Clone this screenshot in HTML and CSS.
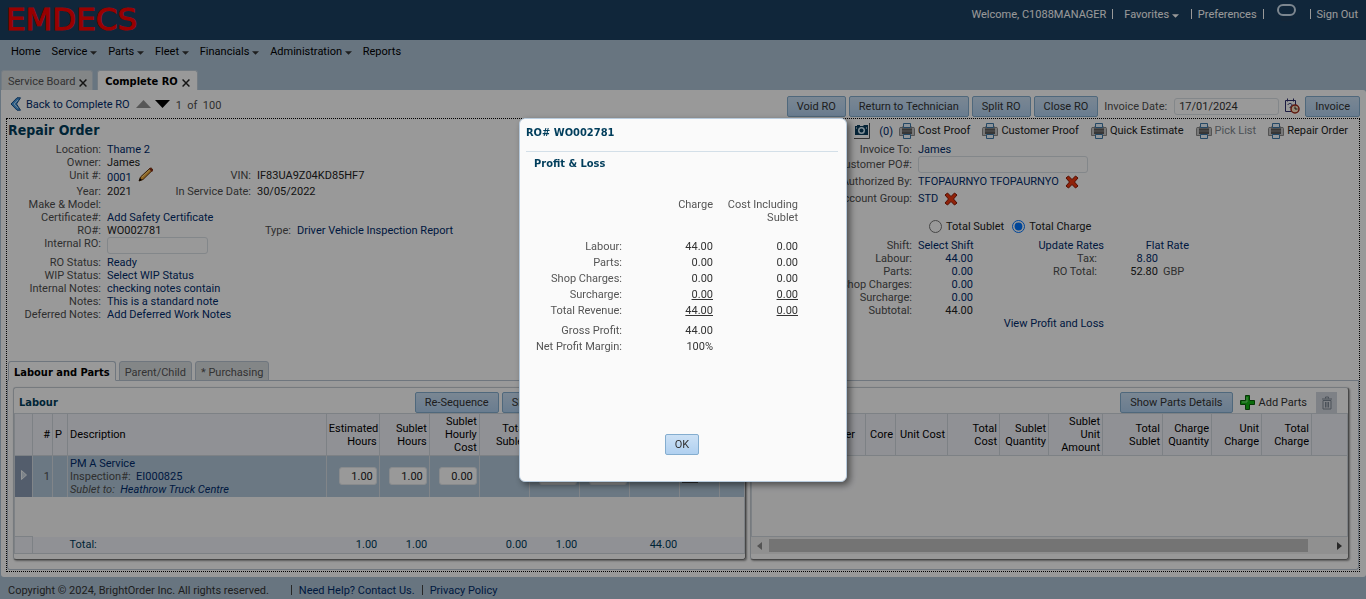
FILE: index.html
```html
<!DOCTYPE html>
<html lang="en">
<head>
<meta charset="utf-8">
<title>EMDECS - Complete RO</title>
<link rel="stylesheet" href="styles.css">
</head>
<body>
<svg class="sprite" aria-hidden="true">
  <symbol id="printer" viewBox="0 0 16 16">
    <path d="M1 4.500h14l.5 1v7H.5v-7z" fill="#c8c8c8" stroke="#8a8a8a"/>
    <path d="M3 3.500h10v4H3z" fill="#888"/>
    <path d="M4.500 .5h7v4h-7z" fill="#eaf6ff" stroke="#3c78a8"/>
    <path d="M3 6h10v5H3z" fill="#5c5c5c"/>
    <path d="M3 8h10" stroke="#909090"/>
    <path d="M4.500 11.500h7v4h-7z" fill="#f4faff" stroke="#3c78a8"/>
  </symbol>
  <symbol id="cross" viewBox="0 0 14 14">
    <path d="M3.500 1L7 4.500 10.500 1 13 3 9.500 7l3.500 4-2.500 2L7 9.500 3.500 13 1 11l3.500-4L1 3z" fill="#f03a10" stroke="#8a1400"/>
  </symbol>
  <symbol id="caret" viewBox="0 0 8 4"><path d="M0 0h8L4 4z" fill="currentColor"/></symbol>
</svg>

<div class="page">
  <header class="banner">
    <a class="logo" href="#">EMDECS</a>
    <div class="account">
      <span>Welcome, C1088MANAGER</span><i class="bar"></i>
      <a class="favorites" href="#">Favorites <svg class="caret"><use href="#caret"/></svg></a><i class="bar"></i>
      <a href="#">Preferences</a><i class="bar"></i>
      <a class="chat" href="#" aria-label="Chat"><svg width="20" height="18" viewBox="0 0 20 18"><rect x="1" y="1" width="17" height="10" rx="5" fill="none" stroke="#cfe0ee" stroke-width="2"/><path d="M3 14h13M4 16h11" stroke="#263f57"/></svg></a><i class="bar"></i>
      <a href="#">Sign Out</a>
    </div>
  </header>

  <nav class="menu">
    <a href="#">Home</a>
    <a href="#">Service <svg class="caret"><use href="#caret"/></svg></a>
    <a href="#">Parts <svg class="caret"><use href="#caret"/></svg></a>
    <a href="#">Fleet <svg class="caret"><use href="#caret"/></svg></a>
    <a href="#">Financials <svg class="caret"><use href="#caret"/></svg></a>
    <a href="#">Administration <svg class="caret"><use href="#caret"/></svg></a>
    <a href="#">Reports</a>
  </nav>

  <div class="tabs">
    <a class="tab" href="#">Service Board <svg class="close" viewBox="0 0 7 7"><path d="M.5.5l6 6M6.500.5l-6 6" stroke="currentColor" stroke-width="1.300"/></svg></a>
    <a class="tab active" href="#">Complete RO <svg class="close" viewBox="0 0 7 7"><path d="M.5.5l6 6M6.500.5l-6 6" stroke="currentColor" stroke-width="1.300"/></svg></a>
  </div>

  <main class="work">
    <div class="toolbar">
      <a class="back" href="#"><svg width="12" height="14" viewBox="0 0 12 14"><path d="M7 .8L1 7l6 6.200h3.500L6.500 7l4-6.200z" fill="#4c9be0" stroke="#16508c"/><path d="M8 3L4 7l4 4" fill="none" stroke="#b8dcf8"/></svg>Back to Complete RO</a>
      <button class="arrow" aria-label="Previous"><svg width="15" height="8" viewBox="0 0 15 8"><path d="M0 8h15L7.500 0z" fill="#909090"/></svg></button>
      <button class="arrow" aria-label="Next"><svg width="15" height="8" viewBox="0 0 15 8"><path d="M0 0h15L7.500 8z"/></svg></button>
      <span class="count">1&nbsp; of &nbsp;100</span>
      <div class="actions">
        <button class="btn">Void RO</button>
        <button class="btn">Return to Technician</button>
        <button class="btn">Split RO</button>
        <button class="btn">Close RO</button>
        <label class="date-label" for="invoice-date">Invoice Date:</label>
        <input class="field date" id="invoice-date" value="17/01/2024">
        <button class="icon-btn" aria-label="Pick date"><svg width="16" height="16" viewBox="0 0 16 16"><path d="M1.500 2.500h10v11h-10z" fill="#fff" stroke="#2c2c6c"/><path d="M3.500.5v3M9.500.5v3M4 7c0-2 4-2 4 0 0 1.500-2 1-2 3" fill="none" stroke="#2c2c6c"/><circle cx="11" cy="11" r="4" fill="#ffe6c4" stroke="#a02818" stroke-width="1.500"/><path d="M11 8.500V11h2.500" fill="none" stroke="#222"/></svg></button>
        <button class="btn">Invoice</button>
      </div>
    </div>

    <div class="order">
      <div class="details">
        <section class="left">
          <h1>Repair Order</h1>
          <div class="row"><span class="lab">Location:</span><a href="#">Thame 2</a></div>
          <div class="row"><span class="lab">Owner:</span><b class="val">James</b></div>
          <div class="row tall"><span class="lab">Unit #:</span><span class="unit low"><a href="#">0001</a><svg width="16" height="15" viewBox="0 0 16 15"><path d="M1 14l1.500-4L12 1.200q1.500-.5 2.500 1v1L5 12.500z" fill="#f0a838" stroke="#5c3008"/><path d="M4 10l8-7.500" stroke="#ffe088"/><path d="M1 14l1-3 2 2z"/><path d="M11 2l3 3 1-1.500L13 .8z" fill="#8c2c18"/></svg></span><span class="lab2">VIN:</span><b class="val">IF83UA9Z04KD85HF7</b></div>
          <div class="row"><span class="lab">Year:</span><b class="val short">2021</b><span class="lab2">In Service Date:</span><b class="val">30/05/2022</b></div>
          <div class="row"><span class="lab">Make &amp; Model:</span></div>
          <div class="row"><span class="lab">Certificate#:</span><a href="#">Add Safety Certificate</a></div>
          <div class="row"><span class="lab">RO#:</span><b class="val wide">WO002781</b><span class="lab2">Type:</span><a href="#">Driver Vehicle Inspection Report</a></div>
          <div class="row taller"><label class="lab" for="internal-ro">Internal RO:</label><input class="field internal" id="internal-ro"></div>
          <div class="row"><span class="lab">RO Status:</span><a href="#">Ready</a></div>
          <div class="row"><span class="lab">WIP Status:</span><a href="#">Select WIP Status</a></div>
          <div class="row"><span class="lab">Internal Notes:</span><a href="#">checking notes contain</a></div>
          <div class="row"><span class="lab">Notes:</span><a href="#">This is a standard note</a></div>
          <div class="row"><span class="lab">Deferred Notes:</span><a href="#">Add Deferred Work Notes</a></div>
        </section>

        <section class="right">
          <div class="prints">
            <a class="photo" href="#"><svg width="16" height="16" viewBox="0 0 16 16"><path d="M0 15.500h15.500V0" fill="none" stroke="#555"/><path d="M1 3h2V2h3v1h3l1-1h4v10H1z" fill="#0a3c5c"/><circle cx="7.500" cy="7.500" r="3.500" fill="#d8eefa"/><circle cx="7.500" cy="7.500" r="2" fill="#0a3c5c"/><path d="M2 5h1M12 5h1" stroke="#fff"/></svg><span class="low">(0)</span></a>
            <a href="#"><svg class="ico"><use href="#printer"/></svg>Cost Proof</a>
            <a href="#"><svg class="ico"><use href="#printer"/></svg>Customer Proof</a>
            <a href="#"><svg class="ico"><use href="#printer"/></svg>Quick Estimate</a>
            <a class="off" href="#"><svg class="ico"><use href="#printer"/></svg>Pick List</a>
            <a href="#"><svg class="ico"><use href="#printer"/></svg>Repair Order</a>
          </div>
          <div class="row"><span class="lab">Invoice To:</span><a href="#">James</a></div>
          <div class="row mid"><label class="lab" for="po">Customer PO#:</label><input class="field po" id="po"></div>
          <div class="row mid"><span class="lab">Authorized By:</span><a href="#">TFOPAURNYO TFOPAURNYO</a><svg class="x"><use href="#cross"/></svg></div>
          <div class="row mid"><span class="lab">Account Group:</span><a href="#">STD</a><svg class="x"><use href="#cross"/></svg></div>
          <div class="radios">
            <label><input type="radio" name="total">Total Sublet</label>
            <label><input type="radio" name="total" checked>Total Charge</label>
          </div>
          <div class="row"><span class="lab">Shift:</span><a class="num" href="#">Select Shift</a><a class="rates" href="#">Update Rates</a><a class="flat" href="#">Flat Rate</a></div>
          <div class="row"><span class="lab">Labour:</span><a class="num" href="#">44.00</a><span class="lab3">Tax:</span><a class="num" href="#">8.80</a></div>
          <div class="row"><span class="lab">Parts:</span><a class="num" href="#">0.00</a><span class="lab3">RO Total:</span><b class="val num">52.80</b><span class="cur">GBP</span></div>
          <div class="row"><span class="lab">Shop Charges:</span><a class="num" href="#">0.00</a></div>
          <div class="row"><span class="lab">Surcharge:</span><a class="num" href="#">0.00</a></div>
          <div class="row"><span class="lab">Subtotal:</span><b class="val num">44.00</b></div>
          <div class="row"><a class="profit" href="#">View Profit and Loss</a></div>
        </section>
      </div>

      <div class="subtabs">
        <a class="subtab active" href="#">Labour and Parts</a>
        <a class="subtab" href="#">Parent/Child</a>
        <a class="subtab" href="#">* Purchasing</a>
      </div>

      <div class="panels">
        <section class="panel labour">
          <div class="panel-head"><h2>Labour</h2><div class="panel-tools"><button class="btn">Re-Sequence</button><button class="btn">Show</button></div></div>
          <table class="grid">
            <colgroup><col class="w18"><col class="w20"><col class="w15"><col><col class="w53"><col class="w50"><col class="w50"><col class="w50"><col class="w50"><col class="w50"><col class="w50"><col class="w40"><col class="w25"></colgroup>
            <thead><tr><th></th><th>#</th><th class="l">P</th><th class="l">Description</th><th>Estimated Hours</th><th>Sublet Hours</th><th>Sublet Hourly Cost</th><th>Total Sublet</th><th></th><th></th><th></th><th></th><th></th></tr></thead>
            <tbody>
              <tr class="selected">
                <td class="handle"><svg width="6" height="10" viewBox="0 0 6 10"><path d="M.5.5v9L5.500 5z" fill="#cfdbe6" stroke="#f4f8fb"/></svg></td><td>1</td><td></td>
                <td class="l"><a href="#">PM A Service</a><br>Inspection#:&nbsp; <a href="#">EI000825</a><br><em>Sublet to:&nbsp; <a href="#">Heathrow Truck Centre</a></em></td>
                <td><input class="cell" aria-label="Estimated hours" value="1.00"></td>
                <td><input class="cell" aria-label="Sublet hours" value="1.00"></td>
                <td><input class="cell" aria-label="Sublet hourly cost" value="0.00"></td>
                <td></td>
                <td><input class="cell" aria-label="Charge hours"></td>
                <td><input class="cell" aria-label="Rate"></td>
                <td></td>
                <td class="c"><svg width="34" height="16" viewBox="0 0 34 16"><path d="M1 1h14v14H1z" fill="#eee" stroke="#444" stroke-width="2"/><path d="M22 13h2M30 13h2" stroke="#1a3c8c" stroke-width="2"/></svg></td>
                <td class="c"><svg class="x"><use href="#cross"/></svg></td>
              </tr>
              <tr class="filler"><td colspan="13"></td></tr>
            </tbody>
            <tfoot><tr><td class="corner"></td><td></td><td></td><td class="l">Total:</td><td>1.00</td><td>1.00</td><td></td><td>0.00</td><td>1.00</td><td></td><td>44.00</td><td></td><td></td></tr></tfoot>
          </table>
        </section>

        <section class="panel parts">
          <div class="panel-head"><div class="panel-tools"><button class="btn">Show Parts Details</button><a class="add" href="#"><svg width="15" height="15" viewBox="0 0 15 15"><path d="M5.500.5h4v5h5v4h-5v5h-4v-5h-5v-4h5z" fill="#12b412" stroke="#0a5c0a"/><path d="M7 2v5H2" fill="none" stroke="#7ee87e"/></svg>Add Parts</a><button class="trash" aria-label="Delete"><svg width="12" height="14" viewBox="0 0 12 14"><path d="M1 3h10M4.500 2.500V1h3v1.500M2 4.500h8V13H2zM4.500 6v5.500M6 6v5.500M7.500 6v5.500" fill="none" stroke="#7c8794"/></svg></button></div></div>
          <table class="grid">
            <colgroup><col><col class="w30"><col class="w52"><col class="w52"><col class="w49"><col class="w54"><col class="w60"><col class="w49"><col class="w50"><col class="w50"><col class="w36"></colgroup>
            <thead><tr><th class="pn">Number</th><th>Core</th><th>Unit Cost</th><th>Total Cost</th><th>Sublet Quantity</th><th>Sublet Unit Amount</th><th>Total Sublet</th><th>Charge Quantity</th><th>Unit Charge</th><th>Total Charge</th><th></th></tr></thead>
            <tbody><tr class="filler"><td colspan="11"></td></tr></tbody>
          </table>
          <div class="scroll"><svg width="5" height="8" viewBox="0 0 5 8"><path d="M5 0v8L0 4z" fill="#8c8c8c"/></svg><span class="thumb"></span><svg width="5" height="8" viewBox="0 0 5 8"><path d="M0 0v8l5-4z" fill="#444"/></svg></div>
        </section>
      </div>
    </div>
  </main>

  <footer class="foot">
    <span>Copyright © 2024, BrightOrder Inc. All rights reserved.</span><i class="bar"></i>
    <a href="#">Need Help? Contact Us.</a><i class="bar"></i>
    <a href="#">Privacy Policy</a>
  </footer>
</div>

<div class="shade">
  <div class="dialog" role="dialog" aria-labelledby="dialog-title">
    <h2 id="dialog-title">RO# WO002781</h2>
    <h3>Profit &amp; Loss</h3>
    <table class="pl">
      <colgroup><col class="w96"><col class="w91"><col class="w85"></colgroup>
      <thead><tr><th></th><th>Charge</th><th>Cost Including Sublet</th></tr></thead>
      <tbody>
        <tr><th>Labour:</th><td>44.00</td><td>0.00</td></tr>
        <tr><th>Parts:</th><td>0.00</td><td>0.00</td></tr>
        <tr><th>Shop Charges:</th><td>0.00</td><td>0.00</td></tr>
        <tr><th>Surcharge:</th><td><u>0.00</u></td><td><u>0.00</u></td></tr>
        <tr><th>Total Revenue:</th><td><u>44.00</u></td><td><u>0.00</u></td></tr>
      </tbody>
      <tbody class="net">
        <tr><th>Gross Profit:</th><td>44.00</td><td></td></tr>
        <tr><th>Net Profit Margin:</th><td>100%</td><td></td></tr>
      </tbody>
    </table>
    <button class="btn ok">OK</button>
  </div>
</div>
</body>
</html>
```
FILE: styles.css
```css
* { box-sizing: border-box; }
body, button, input { font: 11px/13px Roboto, "Noto Sans", sans-serif; }
body { margin: 0; color: #4f4f4f; background: #adc3d6; }
a { color: #002c6c; text-decoration: none; }
h1, h2, h3 { margin: 0; color: #003d5b; font: bold 11px/14px "DejaVu Sans Condensed", "DejaVu Sans", sans-serif; }
button { margin: 0; padding: 0; border: 0; background: none; }
.sprite { position: absolute; width: 0; height: 0; }
.page { display: flex; flex-direction: column; min-height: 100vh; }
.bar { width: 1px; height: 10px; background: currentColor; }
.caret { width: 7px; height: 4px; }
.low { padding-top: 2px; }

.banner { display: flex; justify-content: space-between; height: 40px; padding: 0 8px 0 6px; background: #1c4062; }
.logo { color: #ff0000; font: 31px/38px "DejaVu Sans", sans-serif; -webkit-text-stroke: 1px #ff0000; }
.account { display: flex; align-items: center; gap: 6px; height: 28px; color: #fff; }
.account a { color: #fff; }
.favorites { padding: 0 6px 0 5px; }
.chat { padding: 0 7px; height: 20px; }
.menu { display: flex; gap: 11px; height: 30px; padding: 5px 11px; border-top-left-radius: 4px; }
.menu a { color: #000; }
.menu .caret { color: #333; }
.tabs { display: flex; gap: 4px; padding-left: 1px; }
.tab { height: 20px; padding: 4px 5px 4px 6px; color: #555; background: #dbe0e2; border: 1px solid #c2cfda; border-bottom: 0; border-radius: 3px 3px 0 0; }
.tab.active { padding: 4px 7px; color: #000; background: #fff; font: bold 11px/13px "DejaVu Sans Condensed", "DejaVu Sans", sans-serif; }
.close { width: 8px; height: 8px; margin: 0 0 -2px 1px; color: #222; }

.work { display: flex; flex: 1; flex-direction: column; margin-left: 1px; padding: 0 6px 5px 5px; background: #fff; border-radius: 0 3px 3px 3px; }
.toolbar { display: flex; align-items: center; height: 28px; padding-left: 4px; }
.back { display: flex; align-items: center; gap: 4px; }
.arrow { display: flex; margin-left: 6px; }
.arrow + .arrow { margin-left: 4px; }
.count { margin-left: 6px; padding-top: 3px; }
.actions { display: flex; align-items: center; gap: 3px; margin-left: auto; padding-top: 4px; }
.btn { height: 21px; padding: 0 9px; color: #333; background: linear-gradient(#cce1f5, #b0d0f0); border: 1px solid #84adcf; border-radius: 2px; }
.date-label { padding: 0 4px 0 3px; }
.field { min-width: 0; height: 17px; padding: 0 4px; color: #333; background: #fff; border: 1px solid #dbe1e6; border-radius: 3px; }
.date { width: 105px; }
.icon-btn { display: flex; width: 20px; padding: 0 2px; }

.order { display: flex; flex: 1; flex-direction: column; border: 1px dotted #000; }
.details { display: grid; grid-template-columns: 1fr 1fr; min-height: 242px; }
h1 { height: 24px; padding-left: 1px; font-size: 14px; line-height: 22px; }
.row { display: flex; gap: 6px; height: 13px; white-space: nowrap; }
.tall { height: 16px; }
.mid { align-items: center; height: 17px; }
.taller { height: 19px; }
.lab { width: 94px; text-align: right; }
.val { color: #222; font-weight: normal; }
.unit { display: flex; gap: 6px; width: 50px; }
.unit svg { margin-top: -4px; }
.short { width: 50px; }
.wide { width: 90px; }
.lab2 { width: 88px; text-align: right; }
.internal { width: 101px; }
.right .lab { width: 229px; }
.prints { display: flex; align-items: center; justify-content: flex-end; gap: 12px; height: 24px; padding: 0 11px 1px 0; }
.prints a { display: flex; align-items: center; gap: 3px; color: #222; }
.prints .photo { gap: 9px; margin-right: -6px; color: #002c6c; }
.prints .off { color: #808890; }
.ico { width: 16px; height: 16px; }
.x { width: 14px; height: 14px; }
.po { width: 170px; }
.radios { display: flex; gap: 8px; padding: 13px 0 6px 246px; color: #222; }
.radios label { display: flex; align-items: center; gap: 4px; }
.radios input { width: 13px; height: 13px; margin: 0; }
.num { width: 55px; text-align: right; }
.rates { width: 125px; text-align: right; }
.flat { width: 79px; text-align: right; }
.lab3 { width: 118px; text-align: right; }
.cur { margin-left: -1px; }
.profit { width: 421px; text-align: right; }

.subtabs { display: flex; gap: 3px; height: 20px; padding-left: 1px; border-bottom: 1px solid #b9c5d2; }
.subtab { height: 20px; padding: 4px 5px; color: #555; background: #dbe0e2; border: 1px solid #b9c5d2; border-radius: 3px 3px 0 0; }
.subtab.active { color: #000; background: #fff; border-bottom-color: #fff; font: bold 11px/13px "DejaVu Sans Condensed", "DejaVu Sans", sans-serif; }
.panels { display: flex; flex: 1; gap: 4px; margin-bottom: 1px; padding: 6px 9px 9px 5px; border: 1px solid #b9c5d2; border-top: 0; border-radius: 0 0 3px 3px; }
.panel { display: flex; flex-direction: column; min-width: 0; padding-bottom: 5px; border: 1px solid #c5ccd2; border-right-color: #777; border-bottom-color: #777; border-radius: 3px; box-shadow: 1px 1px 2px #999; }
.labour { flex: 733; }
.parts { flex: 599; }
.panel-head { display: flex; align-items: center; justify-content: space-between; height: 25px; padding: 4px 0 0 5px; }
.panel-tools { display: flex; align-items: center; gap: 3px; }
.labour .panel-tools { margin-right: 196px; }
.parts .panel-tools { margin-left: auto; padding-right: 11px; }
.add { display: flex; align-items: center; gap: 4px; padding: 0 6px 0 4px; color: #333; }
.trash { display: flex; align-items: center; justify-content: center; width: 21px; height: 21px; background: #d3d8df; }
.grid { flex: 1; width: 100%; table-layout: fixed; border-collapse: collapse; background: #fafafb; border: 1px solid #d0d8de; }
.grid th { height: 42px; padding: 0 2px; color: #000; background: #f0f2f8; border: 1px solid #d0d8de; font-weight: normal; text-align: right; }
.grid td { padding: 0 2px; text-align: right; }
.grid th.l, .grid .l { text-align: left; }
.grid .c { padding: 0; text-align: center; }
.grid th.pn { padding-right: 10px; }
.grid .selected td { height: 41px; background: #b2c8da; border-right: 1px solid #d8dee4; }
.grid .selected .handle { background: #8a9cb4; text-align: center; }
.grid tfoot td { height: 17px; color: #003d5b; background: #f0f2f8; }
.grid tfoot .corner { border: 1px solid #d0d8de; }
.labour .filler td { height: 40px; }
.parts .filler td { height: 81px; }
.cell { width: 100%; max-width: 38px; height: 18px; padding: 0 3px; color: #222; background: #fff; border: 1px solid #e4e8ec; border-radius: 3px; text-align: right; }
.w15 { width: 15px; } .w18 { width: 18px; } .w20 { width: 20px; } .w25 { width: 25px; }
.w30 { width: 30px; } .w36 { width: 36px; } .w40 { width: 40px; } .w49 { width: 49px; }
.w50 { width: 50px; } .w52 { width: 52px; } .w53 { width: 53px; } .w54 { width: 54px; } .w60 { width: 60px; }
.w85 { width: 85px; } .w91 { width: 91px; } .w96 { width: 96px; }
.scroll { display: flex; align-items: center; gap: 7px; height: 17px; padding: 0 6px; background: #f1f1f1; }
.thumb { flex: 1; height: 13px; margin-right: 22px; background: #c1c1c1; }
.foot { display: flex; align-items: center; gap: 7px; height: 22px; padding: 4px 8px 0; color: #333; }
.foot span { margin-right: 15px; }
.foot .bar { color: #444; }

.shade { position: fixed; inset: 0; display: flex; align-items: center; justify-content: center; background: rgba(0, 0, 0, 0.4); }
.dialog { display: flex; flex-direction: column; width: 328px; min-height: 364px; padding: 7px 8px 26px 6px; background: #fafafa; border: 1px solid #b8cbdd; border-radius: 6px; box-shadow: 3px 3px 7px rgba(0, 0, 0, 0.5); }
.dialog h2 { padding-bottom: 11px; border-bottom: 1px solid #d3dfe8; }
.dialog h3 { padding: 5px 8px; }
.pl { width: 272px; margin-top: 22px; table-layout: fixed; border-collapse: collapse; color: #333; }
.pl th { padding: 0; color: #555; font-weight: normal; text-align: right; vertical-align: top; }
.pl td { height: 16px; padding: 0; text-align: right; }
.pl th, .pl td { line-height: 16px; }
.pl thead th { height: 41px; padding-left: 8px; line-height: 13px; }
.net::before { content: ""; display: table-row; height: 4px; }
.ok { align-self: center; margin-top: auto; }
```
